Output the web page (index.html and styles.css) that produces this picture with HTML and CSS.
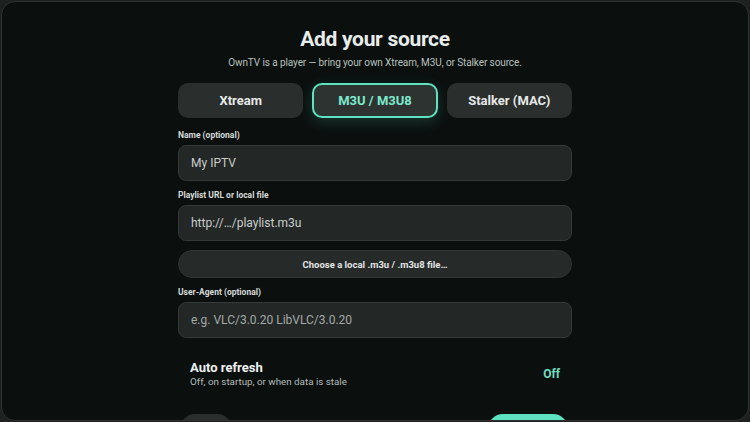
FILE: index.html
```html
<!DOCTYPE html>
<html lang="en">
<head>
    <meta charset="UTF-8">
    <meta name="viewport" content="width=device-width, initial-scale=1.0">
    <title>Add your source</title>
    <link rel="stylesheet" href="styles.css">
</head>
<body>
    <div class="screen">
        <div class="form">
            <h1>Add your source</h1>
            <p class="subtitle">OwnTV is a player — bring your own Xtream, M3U, or Stalker source.</p>
            <div class="tabs">
                <button class="tab">Xtream</button>
                <button class="tab active">M3U / M3U8</button>
                <button class="tab">Stalker (MAC)</button>
            </div>
            <label class="field-label">Name (optional)</label>
            <div class="input">My IPTV</div>
            <label class="field-label">Playlist URL or local file</label>
            <div class="input">http://…/playlist.m3u</div>
            <button class="pick-file">Choose a local .m3u / .m3u8 file…</button>
            <label class="field-label">User-Agent (optional)</label>
            <div class="input placeholder">e.g. VLC/3.0.20 LibVLC/3.0.20</div>
            <div class="setting">
                <div>
                    <div class="setting-title">Auto refresh</div>
                    <div class="setting-sub">Off, on startup, or when data is stale</div>
                </div>
                <div class="setting-value">Off</div>
            </div>
            <div class="actions">
                <button class="btn-back"></button>
                <button class="btn-save"></button>
            </div>
        </div>
    </div>
</body>
</html>
```

FILE: styles.css
```css
body {
    margin: 0;
    padding: 1px 1px 0;
    background-color: #1d2221;
    font-family: Roboto, "Liberation Sans", sans-serif;
    color: #e8ecea;
}

.screen {
    height: 420px;
    background-color: #0b100f;
    border: 1px solid #2b3231;
    border-radius: 14px;
    overflow: hidden;
    box-sizing: border-box;
}

.form {
    width: 394px;
    margin: 0 auto;
    padding-top: 25px;
}

h1 {
    margin: 0;
    font-size: 21px;
    font-weight: 700;
    text-align: center;
    letter-spacing: -0.3px;
}

.subtitle {
    margin: 6px 0 0;
    font-size: 10px;
    text-align: center;
    letter-spacing: -0.1px;
    color: #b9c0be;
}

.tabs {
    display: flex;
    gap: 9px;
    margin-top: 15px;
    padding-bottom: 3px;
}

.tab {
    flex: 1;
    height: 35px;
    border: 2px solid transparent;
    border-radius: 10px;
    background-color: #2a2e2d;
    color: #e6e9e8;
    font-family: inherit;
    font-size: 13px;
    font-weight: 700;
}

.tab.active {
    border-color: #5ee2c0;
    background-color: #2d3331;
    color: #7ee8cc;
    box-shadow: 0 4px 14px rgba(94, 226, 192, 0.18);
}

.field-label {
    display: block;
    margin: 9px 0 5px;
    font-size: 8.5px;
    line-height: 10px;
    font-weight: 700;
    color: #d6dad9;
}

.input {
    height: 36px;
    padding: 0 12px;
    display: flex;
    align-items: center;
    background-color: #232726;
    border: 1px solid #343a38;
    border-radius: 8px;
    font-size: 12px;
    color: #c9cdcb;
    box-sizing: border-box;
}

.input.placeholder {
    color: #a4aaa8;
}

.pick-file {
    display: block;
    width: 100%;
    height: 28px;
    margin-top: 9px;
    border: 1px solid #303533;
    border-radius: 14px;
    background-color: #262a29;
    color: #e2e5e4;
    font-family: inherit;
    font-size: 9.5px;
    font-weight: 700;
}

.setting {
    display: flex;
    justify-content: space-between;
    align-items: center;
    padding: 0 12px;
    margin-top: 22px;
}

.setting-title {
    font-size: 13px;
    font-weight: 700;
    color: #eef1f0;
}

.setting-sub {
    margin-top: 1px;
    font-size: 9.8px;
    color: #b4bab8;
}

.setting-value {
    font-size: 12px;
    font-weight: 700;
    color: #6fdcc0;
}

.actions {
    display: flex;
    justify-content: space-between;
    margin-top: 27px;
}

.btn-back {
    width: 52px;
    height: 30px;
    margin-left: 2px;
    border: none;
    border-radius: 15px;
    background-color: #2a2f2d;
}

.btn-save {
    width: 80px;
    height: 30px;
    margin-right: 4px;
    border: none;
    border-radius: 15px;
    background-color: #5ee2c0;
}
```
